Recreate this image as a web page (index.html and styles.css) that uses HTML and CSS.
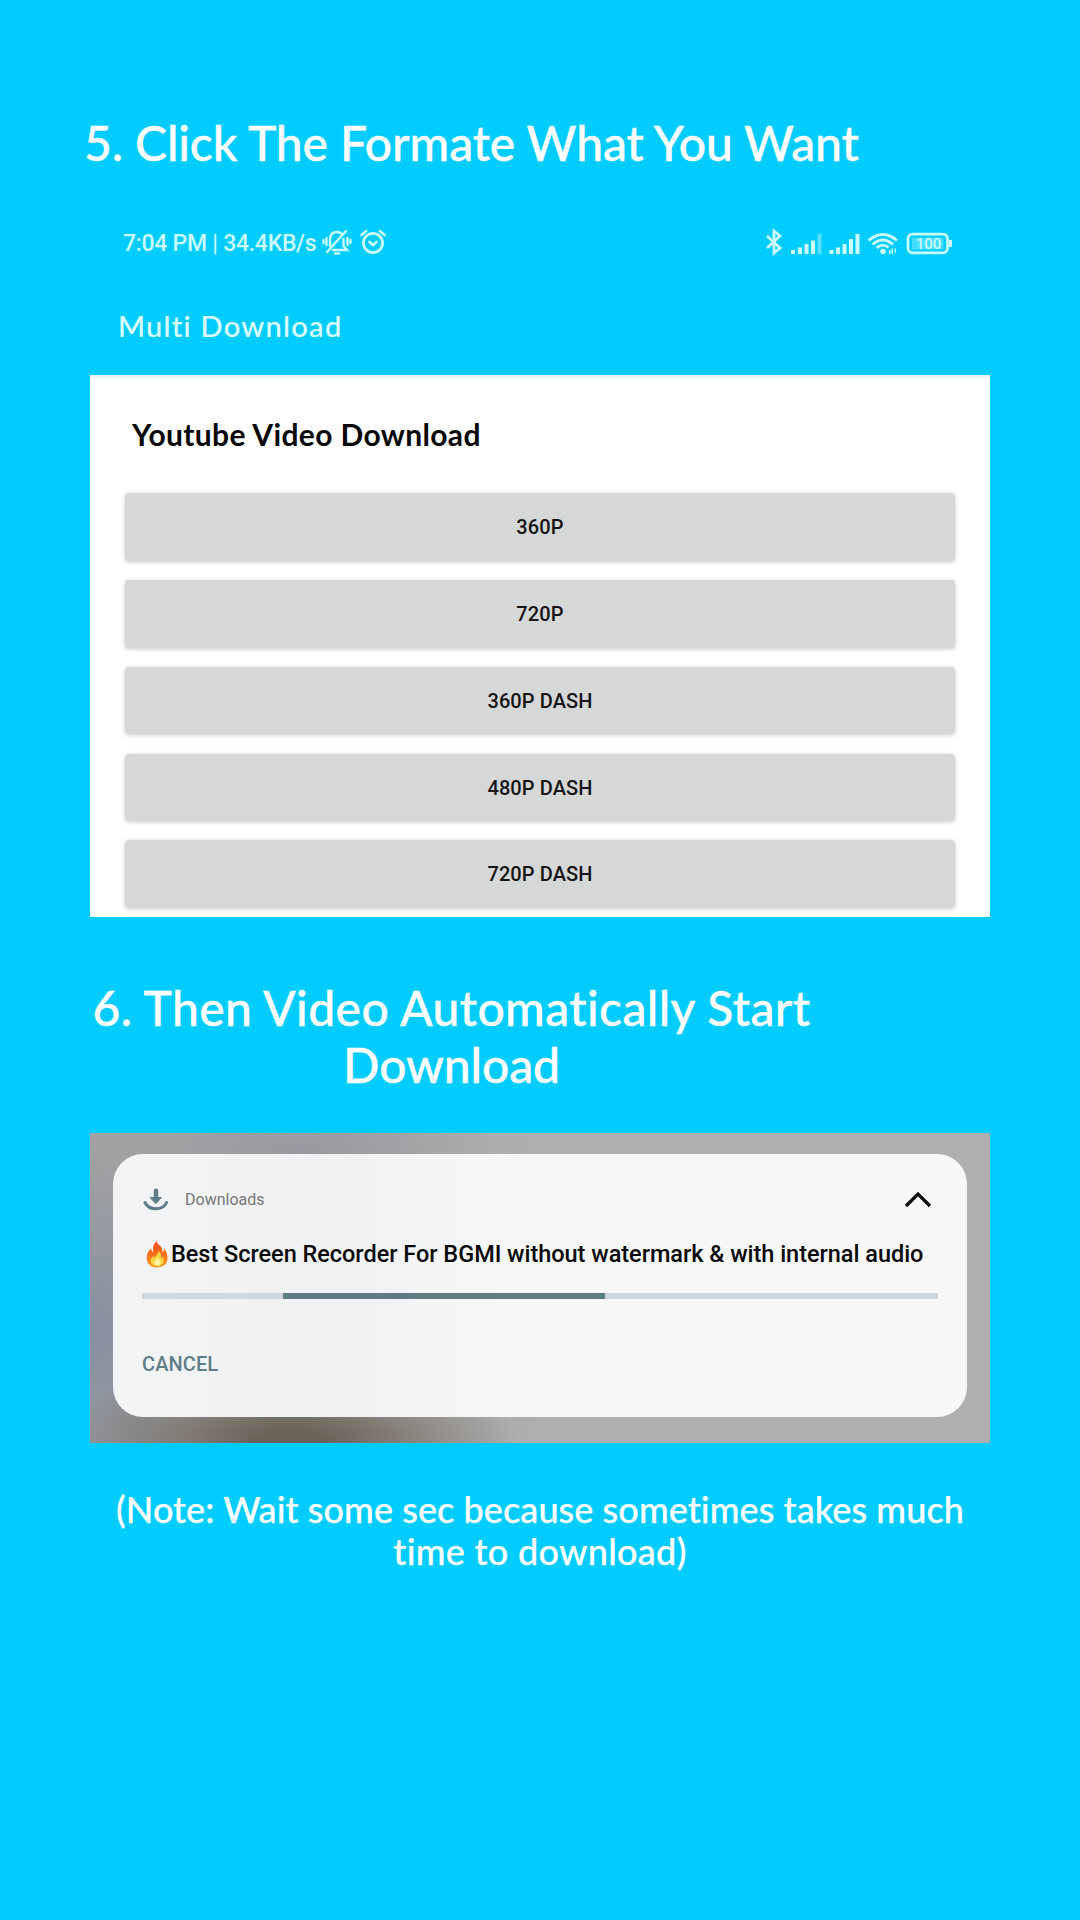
FILE: index.html
```html
<!DOCTYPE html>
<html lang="en">
<head>
<meta charset="utf-8">
<title>Download steps</title>
<link rel="stylesheet" href="styles.css">
</head>
<body>
<main class="page">
  <h1 class="step step-five"><span>5. Click The Formate What You Want</span></h1>

  <section class="phone">
    <div class="status">
      <span class="status-text">7:04 PM | 34.4KB/s</span>
      <svg class="bell" width="30" height="28" viewBox="0 0 30 28" fill="none" stroke="currentColor" stroke-width="2.4" stroke-linecap="round">
        <path d="M8 18V12Q8 4 15 4Q18 4 20 6M21.500 11V18L25 22H11M5 24L24 3M13 25.500H17M4.500 10V17M1.500 12V15M25.500 10V17M28.500 12V15"/>
      </svg>
      <svg class="alarm" width="26" height="26" viewBox="0 0 26 26" fill="none" stroke="currentColor" stroke-width="2.700" stroke-linecap="round">
        <circle cx="13" cy="14" r="9.600"/>
        <path d="M1.500 6L6 2.200M24.500 6L20 2.200M9.500 13L13 16L16.500 13"/>
      </svg>
      <div class="indicators">
        <svg width="190" height="28" viewBox="0 0 190 28" fill="none" stroke="currentColor" stroke-width="2.700">
          <path d="M2 8L15 20L9 25V3L15 8L2 20"/>
          <g fill="currentColor" stroke="none">
            <path d="M26 22h4v4h-4zM33 19.500h4v6.500h-4zM39.500 16h4v10h-4zM46 12.500h4v13.500h-4z"/>
            <path opacity=".45" d="M52.500 6h4v20h-4z"/>
            <path d="M64.500 22h4v4h-4zM71 19.500h4v6.500h-4zM77.500 16h4v10h-4zM84 11h4v15h-4zM90.500 6h4v20h-4z"/>
            <circle cx="118" cy="23.500" r="2.800"/>
            <path d="M124 22h1.500v4h-1.500zM126.500 20.500h1.500v5.500h-1.500zM129.500 20.500h1.500v4h-1.500z"/>
          </g>
          <path stroke-width="2.800" d="M103.500 12.500Q118 .500 132 12.500M107.500 16.500Q118 7.500 128 16.500M111.500 20Q118 14.500 123.500 19.500"/>
          <rect x="143" y="6.200" width="39.500" height="18.600" rx="4.500"/>
          <rect x="147" y="9.500" width="31.500" height="12" rx="1.500" fill="currentColor" opacity=".35" stroke="none"/>
          <path stroke-width="3" d="M185.500 12V19"/>
          <text class="battery" x="163.500" y="21" text-anchor="middle">100</text>
        </svg>
      </div>
    </div>
    <div class="app-title">Multi Download</div>
    <div class="sheet">
      <h2 class="sheet-title">Youtube Video Download</h2>
      <div class="formats">
        <button class="format">360P</button>
        <button class="format">720P</button>
        <button class="format">360P DASH</button>
        <button class="format">480P DASH</button>
        <button class="format">720P DASH</button>
      </div>
    </div>
  </section>

  <h1 class="step step-six"><span>6. Then Video Automatically Start</span><br><span class="step-end">Download</span></h1>

  <section class="shade">
    <article class="notice">
      <header class="notice-head">
        <svg width="26" height="24" viewBox="0 0 26 24" fill="none" stroke="currentColor" stroke-linecap="round">
          <path stroke-width="3" d="M3 14.500Q6 20.800 14 20.800Q22 20.800 24.500 14.500"/>
          <path stroke-width="4.500" d="M14 2.800V10"/>
          <path fill="currentColor" stroke-width="1" d="M8.500 9.500H19.500L14 15.500Z"/>
        </svg>
        <span class="source">Downloads</span>
        <svg class="chevron" width="28" height="18" viewBox="0 0 28 18" fill="none" stroke="#0b0b0b" stroke-width="3.300">
          <path d="M2 15L14 3L26 15"/>
        </svg>
      </header>
      <div class="file">
        <svg width="22" height="27" viewBox="0 0 22 27">
          <defs><linearGradient id="flame" x1="0" y1="0" x2="0" y2="1"><stop offset="0" stop-color="#f4431f"/><stop offset=".55" stop-color="#ff7418"/><stop offset="1" stop-color="#f79b25"/></linearGradient></defs>
          <path fill="url(#flame)" d="M11 0C7 3 6.500 7 7.500 11C5.500 10.500 5 8.500 5.200 7C1.500 11 0 15 .8 19C2 24 6 26.500 11 26.500C17 26.500 21.500 23 21.500 17C21.500 13 20 10 18 7C18.500 9.500 17.500 11 16.500 11C16 6 14.500 5 12.500 3.500C11.300 2.500 11 1.500 11 0Z"/>
          <path fill="#ffd747" d="M12.500 10C13 13 9.500 14 9 17C8 16.500 7.500 16 7 15C4.500 18 4 20.500 6 23C8.500 26 14 26 16.500 23C18.500 20.500 18 17.500 17 15.500C16.500 17 16 17.500 15 17.500C15.500 14.500 15 12 12.500 10Z"/>
          <path fill="#fff3a5" d="M11.500 17Q7 21 9 23.500Q11.500 25.500 14 23.500Q15.500 20.500 11.500 17Z"/>
        </svg>
        <span class="file-name">Best Screen Recorder For BGMI without watermark &amp; with internal audio</span>
      </div>
      <div class="progress"><div class="progress-run"></div></div>
      <div class="cancel">CANCEL</div>
    </article>
  </section>

  <p class="note"><span>(Note: Wait some sec because sometimes takes much</span><br><span class="note-end">time to download)</span></p>
</main>
</body>
</html>
```
FILE: styles.css
```css
* { box-sizing: border-box; }
body { margin: 0; background: #00ccff; }
.page {
  width: 1080px;
  height: 1920px;
  padding: 114px 90px 0;
  overflow: hidden;
  color: #fff;
  font-family: Lato, "Noto Sans", sans-serif;
}
h1, h2, p { margin: 0; }
.step { font-size: 48px; line-height: 57px; font-weight: 500; white-space: nowrap; -webkit-text-stroke: .35px #fff; }
.step-five { margin-left: -6px; letter-spacing: -.1px; }
.step-six { width: 723px; margin-top: 62px; text-align: center; letter-spacing: .4px; }
.step-end { letter-spacing: -.1px; }

.phone { height: 746px; display: flex; flex-direction: column; }
.status {
  height: 44px;
  margin-top: 49px;
  padding: 0 35px 0 33px;
  display: flex;
  align-items: center;
  color: #c9fbff;
}
.status-text {
  width: 199px;
  padding-top: 3px;
  font: 500 23px/44px Roboto, sans-serif;
  letter-spacing: -.28px;
  white-space: nowrap;
}
.alarm { margin-left: 8px; }
.bell, .alarm { flex: none; }
.indicators { margin-left: auto; height: 28px; }
.battery { font: 500 15px Roboto, sans-serif; fill: #c9fbff; stroke: none; }
.app-title {
  height: 111px;
  padding: 42px 0 0 28px;
  font-size: 29px;
  line-height: 40px;
  font-weight: 500;
  letter-spacing: 1.3px;
  font-variant-ligatures: none;
  color: #d8fcff;
  -webkit-text-stroke: .2px #d8fcff;
}
.sheet {
  height: 542px;
  padding: 41px 35px 0;
  background: linear-gradient(#e4eeee, #fff 5px);
  overflow: hidden;
}
.sheet-title {
  height: 77.300px;
  padding-left: 7px;
  color: #080808;
  font-size: 30px;
  line-height: 36px;
  font-weight: 700;
  letter-spacing: .35px;
  white-space: nowrap;
}
.formats { display: flex; flex-direction: column; gap: 19.3px; }
.format {
  height: 67.5px;
  padding: 1px 0 0;
  flex: none;
  border: 0;
  border-radius: 4px;
  background: #d6d8d7;
  box-shadow: 0 1px 4px rgba(0, 0, 0, .22);
  color: #151515;
  font: 500 20px/67px Roboto, sans-serif;
  letter-spacing: .1px;
}

.shade {
  height: 310px;
  margin-top: 40px;
  padding: 21px 23.500px 26px 23px;
  background:
    radial-gradient(ellipse 230px 85px at 200px 310px, #6c6358 15%, transparent 100%),
    radial-gradient(ellipse 110px 190px at 10px 200px, #8790a0, transparent 100%),
    radial-gradient(ellipse 200px 80px at 210px 20px, #9899a0, transparent 100%),
    linear-gradient(90deg, #a2a2a2, #afafaf 50%, #b0afb0);
}
.notice {
  height: 263px;
  padding: 31px 29px 0;
  border-radius: 30px;
  background: linear-gradient(90deg, #f2f4f6, #eff1f3 25%, #f7f7f7 46%);
  color: #607d86;
  font-family: Roboto, sans-serif;
}
.notice-head { height: 30px; display: flex; align-items: center; }
.source { margin-left: 17px; font-size: 16px; line-height: 30px; color: #777; }
.chevron { margin: 0 6px 0 auto; }
.file { height: 40px; margin-top: 19px; padding-left: 4px; display: flex; align-items: center; }
.file-name { margin-left: 3px; color: #080808; font-size: 23.500px; font-weight: 500; line-height: 40px; letter-spacing: -.03px; white-space: nowrap; }
.progress { height: 6px; margin-top: 19px; background: #ced6db; }
.progress-run { width: 322px; height: 6px; margin-left: 141px; background: #607b84; }
.cancel { margin-top: 50px; font-size: 20px; line-height: 30px; font-weight: 500; letter-spacing: .1px; }

.note {
  margin-top: 45px;
  text-align: center;
  font-size: 36px;
  line-height: 42px;
  font-weight: 500;
  white-space: nowrap;
  letter-spacing: .08px;
  -webkit-text-stroke: .25px #fff;
}
.note-end { letter-spacing: .3px; }
```
